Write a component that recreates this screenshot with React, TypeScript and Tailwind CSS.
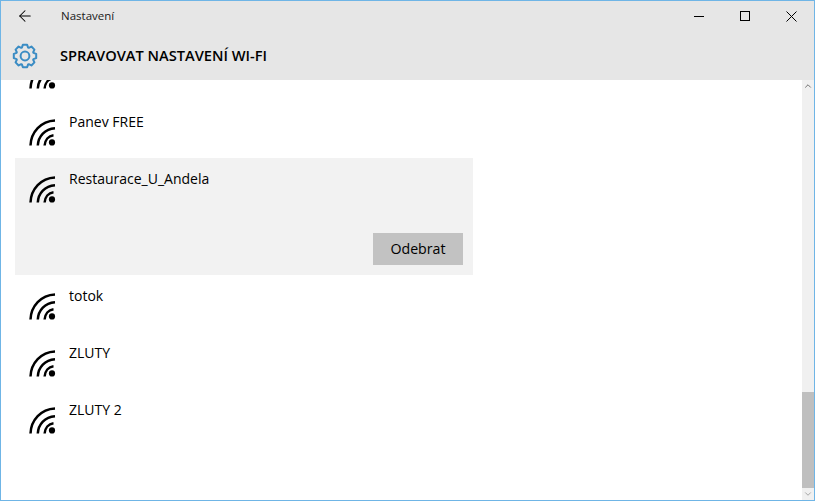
import { ArrowLeft, ChevronDown, ChevronUp } from "lucide-react";

const WifiIcon = () => (
  <svg width="30" height="30" viewBox="0 0 30 30" fill="none" className="shrink-0">
    <g stroke="#000" strokeWidth="2.5">
      <path d="M2.5 27.5 C3 14 13 3 27 2.4" />
      <path d="M9.8 27.5 C10.3 18 17 10.8 27 10.2" />
      <path d="M16.6 27.5 C17 22 20.5 17.8 25.5 17.2" />
    </g>
    <circle cx="24" cy="24.4" r="3.1" fill="#000" />
  </svg>
);

// 8 tooth gear outline, angles worked out once here
const gearPath = () => {
  const pts: string[] = [];
  const teeth = 8;
  for (let i = 0; i < teeth; i++) {
    const a = (i * 2 * Math.PI) / teeth;
    const step = (2 * Math.PI) / teeth;
    [
      [9, -0.5],
      [11.4, -0.27],
      [11.4, 0.27],
      [9, 0.5],
    ].forEach(([r, f]) => {
      const t = a + f * step * 0.9;
      pts.push(`${(14 + r * Math.sin(t)).toFixed(2)} ${(14 - r * Math.cos(t)).toFixed(2)}`);
    });
  }
  return `M${pts.join(" L")} Z`;
};

const GearIcon = () => (
  <svg width="28" height="28" viewBox="0 0 28 28" fill="none" className="ml-[10px] mt-[1px] shrink-0">
    <path d={gearPath()} stroke="#3a8cc4" strokeWidth="2" strokeLinejoin="round" />
    <circle cx="14" cy="14" r="4.4" stroke="#3a8cc4" strokeWidth="2" />
  </svg>
);

const NetworkRow = ({ name, selected }: { name: string; selected?: boolean }) => (
  <div
    className={`ml-[14px] w-[458px] pl-[13px] ${
      selected ? "h-[117px] bg-[#f2f2f2]" : "h-[57px]"
    }`}
  >
    <div className="flex">
      <div className="pt-[17px]">
        <WifiIcon />
      </div>
      <span className="ml-[11px] pt-[11px] text-[14px] leading-[20px] text-black">{name}</span>
    </div>
    {selected && (
      <div className="mt-[28px] flex justify-end pr-[10px]">
        <button className="h-[32px] w-[90px] bg-[#c2c2c2] text-[14.2px] text-black">Odebrat</button>
      </div>
    )}
  </div>
);

const networks = ["Panev FREE", "Restaurace_U_Andela", "totok", "ZLUTY", "ZLUTY 2"];

export default function App() {
  return (
    <div className="flex h-[501px] w-[815px] flex-col overflow-hidden border border-[#6fb5e6] bg-white font-['Open_Sans','Noto_Sans',sans-serif]">
      <header className="h-[79px] shrink-0 bg-[#e6e6e6]">
        <div className="flex h-[30px] items-center">
          <ArrowLeft size={18} strokeWidth={1.4} className="ml-[15px] text-black" />
          <span className="ml-[27px] text-[11.5px] text-[#1a1a1a]">Nastavení</span>
          <div className="ml-auto flex items-center">
            <div className="mr-[36px] h-px w-[10px] bg-black" />
            <div className="mr-[36px] h-[10px] w-[10px] border border-black" />
            <svg width="11" height="11" viewBox="0 0 11 11" className="mr-[17px]">
              <path d="M0.5 0.5 L10.5 10.5 M10.5 0.5 L0.5 10.5" stroke="#000" strokeWidth="1" />
            </svg>
          </div>
        </div>
        <div className="flex h-[49px] items-center">
          <GearIcon />
          <h1 className="ml-[21px] text-[14.65px] font-semibold text-black">
            SPRAVOVAT NASTAVENÍ WI-FI
          </h1>
        </div>
      </header>
      <div className="flex min-h-0 flex-1">
        <main className="min-w-0 flex-1 overflow-hidden">
          <div className="-mt-[36px]">
            <NetworkRow name="" />
            {networks.map((name) => (
              <NetworkRow key={name} name={name} selected={name === "Restaurace_U_Andela"} />
            ))}
          </div>
        </main>
        <aside className="flex w-[12px] shrink-0 flex-col bg-[#f0f0f0]">
          <div className="flex h-[12px] items-center justify-center">
            <ChevronUp size={10} strokeWidth={2} className="text-[#5c5c5c]" />
          </div>
          <div className="flex-1" />
          <div className="h-[96px] bg-[#bfbfbf]" />
          <div className="flex h-[12px] items-center justify-center">
            <ChevronDown size={10} strokeWidth={1.5} className="text-[#7a7a7a]" />
          </div>
        </aside>
      </div>
    </div>
  );
}
